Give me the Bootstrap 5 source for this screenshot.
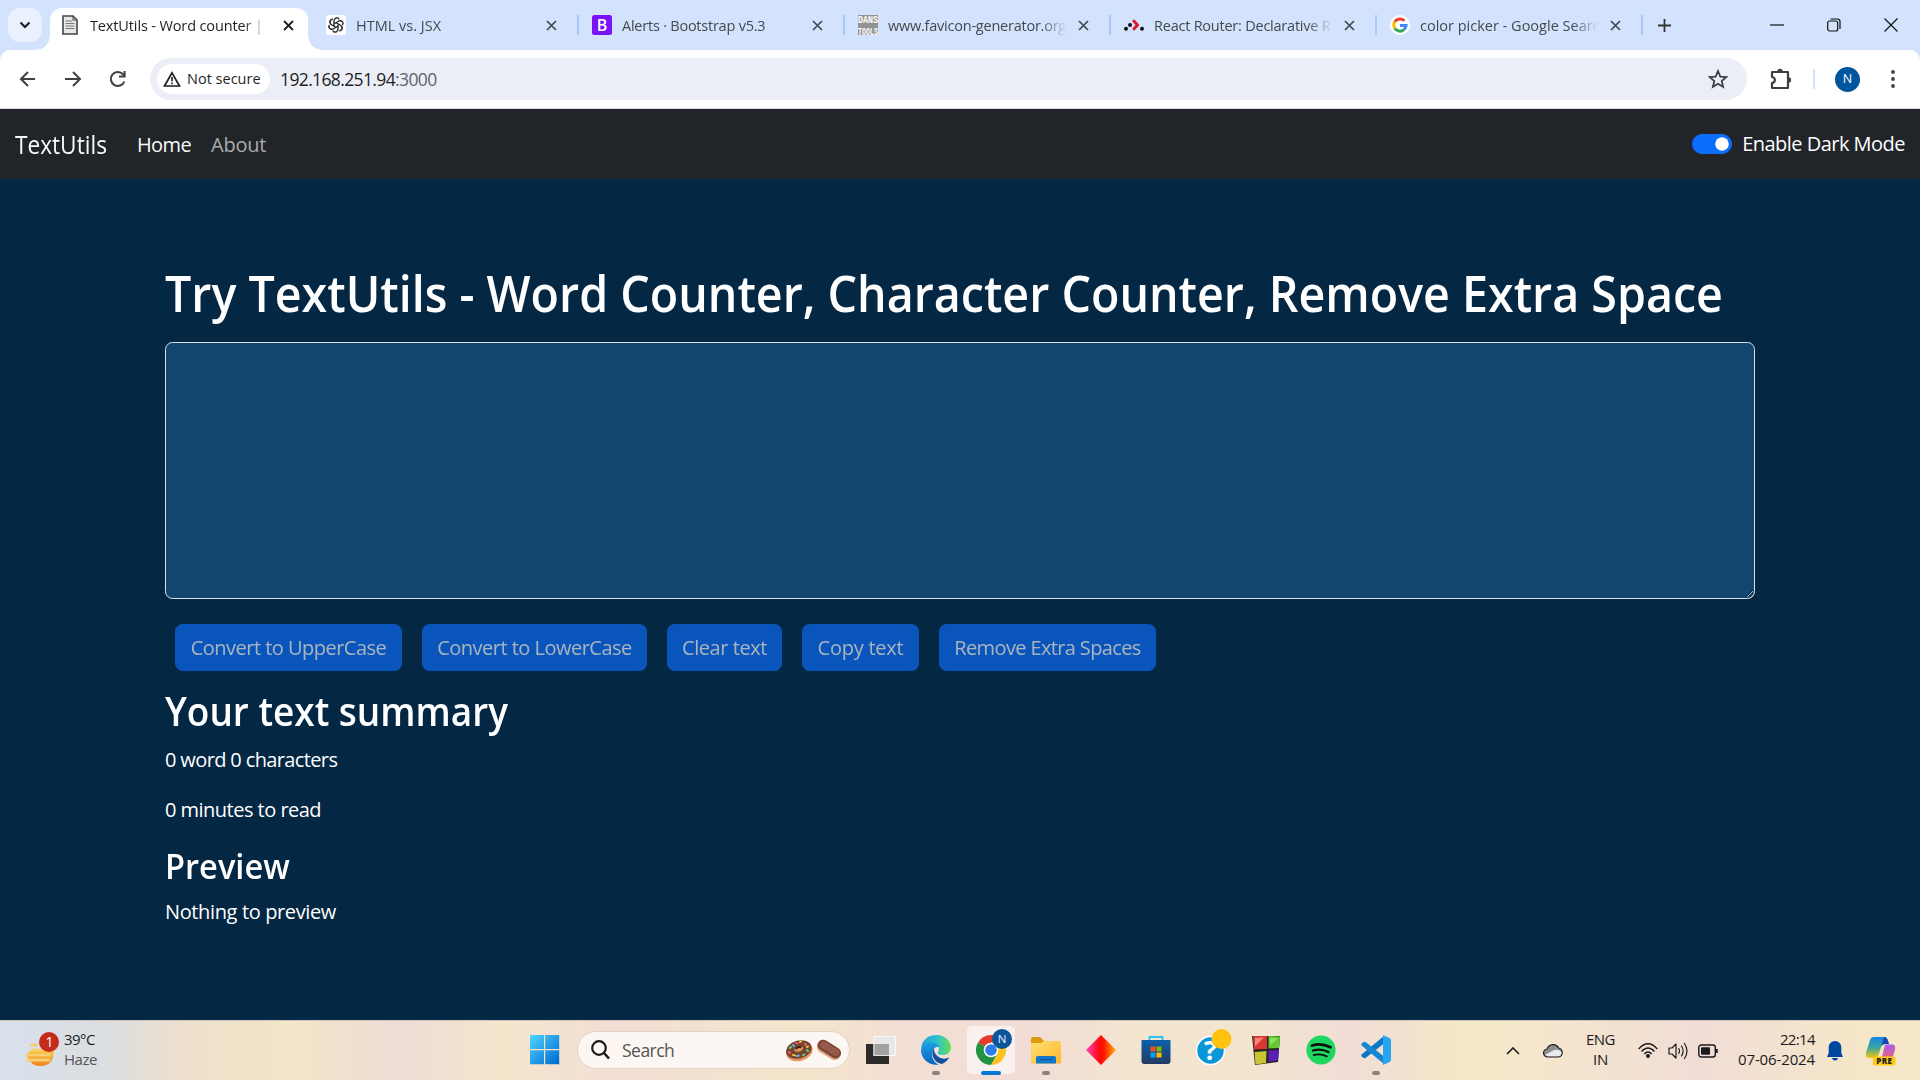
<!DOCTYPE html>
<html lang="en" data-bs-theme="light">
<head>
<meta charset="utf-8">
<title>TextUtils - Word counter</title>
<link href="https://cdn.jsdelivr.net/npm/bootstrap@5.3.0/dist/css/bootstrap.min.css" rel="stylesheet">
<style>
:root{font-size:20px}
body{width:1920px;height:1080px;overflow:hidden;background:#042743;font-family:"Open Sans","Noto Sans",sans-serif}
svg{display:block;flex:none}
/* text tightening */
.sq1,.sq2,.sq3,.sq4,.sq5,.sq6,.narrow{display:inline-block;white-space:nowrap}
.sq1{letter-spacing:-.13px}
.sq2{letter-spacing:-.23px}
.sq3{letter-spacing:-.37px}
.sq4{letter-spacing:-.45px}
.sq5{letter-spacing:-.52px}
.sq6{letter-spacing:-.63px}
.narrow{transform:scaleX(.9317);transform-origin:0 50%}
.narrow-more{transform:scaleX(.9235)}
.brandname{transform:scaleX(.906);width:92px}
/* browser tab strip */
.tabstrip{height:50px;background:#d3e3fd;padding-left:8px}
.tabsearch{width:34px;height:34px;border-radius:12px;background:#e9f1fe;margin-right:8px}
.tab{width:266px;height:34px;padding-left:13px;font-size:14.5px;color:#45494d;position:relative}
.tab::after{content:"";position:absolute;right:0;top:7px;width:2px;height:20px;background:#a8c7fa}
.tab-title{width:182px;margin:0 8px 0 10px;overflow:hidden;white-space:nowrap;flex:none;padding-top:1px;-webkit-mask-image:linear-gradient(90deg,#000 84%,transparent 98%)}
.tab-on{width:258px;height:42px;background:#fff;border-radius:12px 12px 0 0;padding-left:12px;padding-bottom:8px;margin-right:5px;align-self:flex-end;font-size:14.5px;color:#1f1f1f;position:relative}
.tab-on .tab-title{margin:0 11px 0 12px}
.tab-on::before,.tab-on::after{content:"";position:absolute;bottom:0;width:14px;height:14px}
.tab-on::before{left:-14px;background:radial-gradient(circle at 0 0,transparent 13.5px,#fff 14px)}
.tab-on::after{right:-14px;background:radial-gradient(circle at 100% 0,transparent 13.5px,#fff 14px)}
.plus{margin-left:15px}
.winbtns{padding-right:22px;gap:43px}
/* address bar */
.toolbar{height:59px;background:#fff;border-bottom:1px solid #dfe1e5;border-radius:10px 10px 0 0;padding-left:19px}
.strip-under{background:#d3e3fd}
.fwd{margin:0 27px}
.reload{margin-right:23px}
.omnibox{width:1597px;height:42px;border-radius:21px;background:#ebeef7;padding-left:7px;padding-right:19px}
.chip{width:113px;height:30px;border-radius:15px;background:#fff;padding-left:6px;gap:6px;font-size:14.5px;color:#1f1f1f}
.addr{margin-left:10px;font-size:17.5px;color:#1f1f1f}
.port{color:#5f6368}
.puzzle{margin:0 21px 0 23px}
.vsep{width:2px;height:20px;background:#d3e3fd}
.avatar{width:25px;height:25px;border-radius:50%;background:#00559f;color:#fff;font-size:12.5px;margin:0 30px 0 20px}
/* app */
.appnav{height:70px;padding:0 15px}
.appnav .navbar-brand{font-size:25px;margin-right:20px;padding:2px 0 0}
.appnav .nav-link{padding:2px 10px 0}
.appnav .form-check-input{width:40px;height:20px;margin:0}
.darkswitch{gap:10px}
.appmain{height:841px;padding-top:84px;width:1590px;margin:0 auto}
.appmain h1{font-size:50px;line-height:60px;font-weight:600;margin:0 0 19px}
.appmain h2{font-size:40px;line-height:48px;font-weight:600;margin:16px 0 10px}
.appmain h2.preview{font-size:35px;line-height:42px;margin-top:20px}
.appmain p{line-height:30px;margin:0 0 20px;padding-top:1px;margin-top:-1px}
.editor{height:257px;background:#13466e!important;border-radius:7.5px;border:1px solid #dee2e6;padding:8px 15px}
.actions{margin:25px 0 0 10px;gap:20px}
.abtn{height:47px;border-radius:7.5px;padding:1px 0 0;font-size:20px}
.w227{width:227px}.w225{width:225px}.w115{width:115px}.w117{width:117px}.w217{width:217px}
/* taskbar */
.taskbar{height:60px;border-top:1px solid #cfc8c2;color:#1b1b1b;font-size:15px;background:linear-gradient(90deg,#d8e0ec 0,#dcdedf 110px,#efe0cb 195px,#f3e5c8 290px,#efdcd5 400px,#f4e5cc 500px,#f3dfd4 620px,#f3e5ca 800px,#f4dfd5 900px,#f1ddd6 1030px,#f4e5d0 1140px,#f3e4d0 1250px,#f1ddd6 1350px,#f4e6c8 1450px,#f5e7ca 1510px,#f1ddd6 1700px,#f5e6c9 1850px,#f5e7c8 1920px)}
.weather{width:517px;padding-left:25px;gap:4px}
.tcell{width:55px;height:59px;position:relative}
.tcell.live::after{content:"";position:absolute;bottom:5px;left:23.5px;width:8px;height:4px;border-radius:2px;background:#8b817c}
.tcell.cur::before{content:"";position:absolute;left:3.5px;top:5px;width:48px;height:48px;border-radius:5px;background:#faf0ed}
.tcell.cur::after{left:17.5px;width:20px;background:#0078d4}
.tcell svg{position:relative;overflow:visible;margin-bottom:1px}
.pill{width:273px;height:38px;border-radius:19px;background:#fcf7f2;border:1px solid #e2d2c6;margin:0 3.5px 1px 5px;padding:0 7px 0 13px;font-size:17.5px;color:#555;gap:12px}
.two{line-height:20px;margin-top:-4px}
.haze{color:#555}
.tray{padding-right:24px}
.cloud{margin:0 23px}
.lang{width:29px}
.wifi{margin:0 10px 0 23px}
.clock{width:77px;margin:-4px 12px 0 20px}
.bell{margin-right:23px}
</style>
</head>
<body>
<div class="tabstrip d-flex align-items-center">
  <div class="tabsearch d-flex align-items-center justify-content-center flex-shrink-0"><svg width="12" height="8" viewBox="0 0 12 8"><path d="M1.500 1.500 6 6l4.500-4.500" fill="none" stroke="#1f1f1f" stroke-width="2.200"/></svg></div>
  <div class="tab-on d-flex align-items-center flex-shrink-0">
    <svg width="16" height="20" viewBox="0 0 16 20"><path d="M1 1h10l4 4v14H1z" fill="#e8e8e8" stroke="#444" stroke-width="1.600"/><path d="M11 1v4h4" fill="none" stroke="#444"/><path d="M3.500 6h7M3.500 8.500h9M3.500 11h9M3.500 13.500h9" stroke="#777" stroke-width="1.200"/></svg>
    <div class="tab-title"><span class="sq1">TextUtils - Word counter</span> | c</div>
    <svg width="11" height="11" viewBox="0 0 11 11"><path d="m1 1 9 9m0-9-9 9" stroke="#1f1f1f" stroke-width="1.800"/></svg>
  </div>
  <div class="tab d-flex align-items-center flex-shrink-0">
    <svg width="20" height="20" viewBox="0 0 20 20"><rect width="20" height="20" rx="3" fill="#fff"/><g fill="none" stroke="#222" stroke-width=".9"><path id="k" d="M8 11.200V5.700c0-3.600 4.500-4.200 5.600-1.400M8 8.800l4.300-2.500c2.600-1.500 5.400 1.200 4 3.600"/><use href="#k" transform="rotate(60 10 10)"/><use href="#k" transform="rotate(120 10 10)"/><use href="#k" transform="rotate(180 10 10)"/><use href="#k" transform="rotate(240 10 10)"/><use href="#k" transform="rotate(300 10 10)"/></g></svg>
    <div class="tab-title">HTML vs. JSX</div>
    <svg width="11" height="11" viewBox="0 0 11 11"><path d="m1 1 9 9m0-9-9 9" stroke="#45494d" stroke-width="1.700"/></svg>
  </div>
  <div class="tab d-flex align-items-center flex-shrink-0">
    <svg width="20" height="20" viewBox="0 0 20 20"><rect width="20" height="20" rx="2.500" fill="#7a12f8"/><text x="10" y="15.800" text-anchor="middle" font-size="16" font-weight="600" fill="#fff" font-family="Open Sans,sans-serif">B</text></svg>
    <div class="tab-title"><span class="sq2">Alerts · Bootstrap v5.3</span></div>
    <svg width="11" height="11" viewBox="0 0 11 11"><path d="m1 1 9 9m0-9-9 9" stroke="#45494d" stroke-width="1.700"/></svg>
  </div>
  <div class="tab d-flex align-items-center flex-shrink-0">
    <svg width="20" height="20" viewBox="0 0 20 20"><rect width="20" height="20" fill="#929292"/><g fill="#fff" font-size="10" font-weight="700" font-family="Liberation Mono,monospace"><text x="0" y="7.500" textLength="20" lengthAdjust="spacingAndGlyphs">DANS</text><text x="0" y="19.500" textLength="20" lengthAdjust="spacingAndGlyphs">TOOLS</text></g></svg>
    <div class="tab-title"><span class="sq2">www.favicon-generator.org</span></div>
    <svg width="11" height="11" viewBox="0 0 11 11"><path d="m1 1 9 9m0-9-9 9" stroke="#45494d" stroke-width="1.700"/></svg>
  </div>
  <div class="tab d-flex align-items-center flex-shrink-0">
    <svg width="20" height="20" viewBox="0 0 20 20"><path d="m10 6.200 3.600 3.800L10 13.800" fill="none" stroke="#e0162b" stroke-width="3" stroke-linecap="round" stroke-linejoin="round"/><circle cx="2" cy="13.700" r="2" fill="#111"/><circle cx="6" cy="10" r="2" fill="#111"/><circle cx="18" cy="13.700" r="2" fill="#111"/></svg>
    <div class="tab-title"><span class="sq2">React Router: Declarative R</span></div>
    <svg width="11" height="11" viewBox="0 0 11 11"><path d="m1 1 9 9m0-9-9 9" stroke="#45494d" stroke-width="1.700"/></svg>
  </div>
  <div class="tab d-flex align-items-center flex-shrink-0">
    <svg width="20" height="20" viewBox="0 0 20 20"><circle cx="10" cy="10" r="10" fill="#fff"/><g fill="none" stroke-width="3"><path d="M14.400 5.800A6.200 6.200 0 0 0 4.700 6.800" stroke="#ea4335"/><path d="M4.700 6.800a6.200 6.200 0 0 0 0 6.400" stroke="#fbbc05"/><path d="M4.700 13.200a6.200 6.200 0 0 0 9.300 1.500" stroke="#34a853"/><path d="M14 14.700a6 6 0 0 0 2.100-4.200H10" stroke="#4285f4"/></g></svg>
    <div class="tab-title">color picker - Google Searc</div>
    <svg width="11" height="11" viewBox="0 0 11 11"><path d="m1 1 9 9m0-9-9 9" stroke="#45494d" stroke-width="1.700"/></svg>
  </div>
  <svg class="plus" width="13" height="13" viewBox="0 0 13 13"><path d="M6.500 0v13M0 6.500h13" stroke="#333" stroke-width="1.800"/></svg>
  <div class="winbtns d-flex align-items-center ms-auto">
    <svg width="14" height="14" viewBox="0 0 14 14"><path d="M0 7h14" stroke="#111" stroke-width="1.200"/></svg>
    <svg width="14" height="14" viewBox="0 0 14 14"><g fill="none" stroke="#111" stroke-width="1.200"><rect x=".7" y="3" width="10" height="10" rx="2"/><path d="M3.500 1h7a2.500 2.500 0 0 1 2.500 2.500V11"/></g></svg>
    <svg width="14" height="14" viewBox="0 0 14 14"><path d="m.5.5 13 13m0-13-13 13" stroke="#111" stroke-width="1.200"/></svg>
  </div>
</div>
<div class="strip-under"><div class="toolbar d-flex align-items-center">
  <svg width="18" height="18" viewBox="0 0 18 18"><path d="M16 9H2.500M9 2 2 9l7 7" fill="none" stroke="#3c4043" stroke-width="2"/></svg>
  <svg class="fwd" width="18" height="18" viewBox="0 0 18 18"><path d="M1 9h14.500M9 2l7 7-7 7" fill="none" stroke="#3c4043" stroke-width="2"/></svg>
  <svg class="reload" width="18" height="18" viewBox="0 0 18 18"><path d="M15.400 11.500A7 7 0 1 1 14 4.200l1.800 1.900" fill="none" stroke="#3c4043" stroke-width="2"/><path d="M16.600 1v6.600H10V5.600h4.600V1z" fill="#3c4043"/></svg>
  <div class="omnibox d-flex align-items-center flex-shrink-0">
    <div class="chip d-flex align-items-center"><svg width="18" height="16" viewBox="0 0 18 16"><path d="M9 1.800 16.500 15h-15z" fill="none" stroke="#1f1f1f" stroke-width="1.700"/><path d="M9 6v4.200M9 11.500v1.700" stroke="#1f1f1f" stroke-width="1.600"/></svg><span>Not secure</span></div>
    <div class="addr"><span class="sq6">192.168.251.94<span class="port">:3000</span></span></div>
    <svg class="ms-auto" width="20" height="20" viewBox="0 0 20 20"><path d="m10 2 2.300 5.600 6 .5-4.600 3.900 1.400 5.900L10 14.800 4.900 17.900 6.300 12 1.700 8.100l6-.5z" fill="none" stroke="#3c4043" stroke-width="1.800"/></svg>
  </div>
  <svg class="puzzle" width="22" height="22" viewBox="0 0 22 22"><path d="M2 4h16v16H2v-5c3.800-.5 3.800-5.500 0-6z" fill="none" stroke="#3c4043" stroke-width="2.200" stroke-linejoin="round"/><path d="M7.300 3.500a2.700 2.700 0 0 1 5.400 0zM18.500 9.300a2.700 2.700 0 0 1 0 5.400z" fill="#3c4043"/></svg>
  <div class="vsep"></div>
  <div class="avatar d-flex align-items-center justify-content-center">N</div>
  <svg width="6" height="18" viewBox="0 0 6 18"><g fill="#3c4043"><circle cx="3" cy="2" r="1.900"/><circle cx="3" cy="9" r="1.900"/><circle cx="3" cy="16" r="1.900"/></g></svg>
</div></div>

<nav class="navbar navbar-expand bg-dark appnav" data-bs-theme="dark">
  <a class="navbar-brand"><span class="narrow brandname">TextUtils</span></a>
  <div class="navbar-nav me-auto"><a class="nav-link active"><span class="sq6">Home</span></a><a class="nav-link"><span class="sq2">About</span></a></div>
  <div class="darkswitch d-flex align-items-center"><div class="form-check form-switch p-0 m-0 d-flex align-items-center"><input class="form-check-input" id="darkMode" type="checkbox" checked></div><label class="text-white" for="darkMode"><span class="sq5">Enable Dark Mode</span></label></div>
</nav>

<main class="appmain text-white">
  <h1><span class="narrow">Try TextUtils - Word Counter, Character Counter, Remove Extra Space</span></h1>
  <textarea class="form-control editor"></textarea>
  <div class="actions d-flex">
    <button class="btn btn-primary abtn w227" disabled><span class="sq5">Convert to UpperCase</span></button>
    <button class="btn btn-primary abtn w225" disabled><span class="sq5">Convert to LowerCase</span></button>
    <button class="btn btn-primary abtn w115" disabled><span class="sq4">Clear text</span></button>
    <button class="btn btn-primary abtn w117" disabled><span class="sq2">Copy text</span></button>
    <button class="btn btn-primary abtn w217" disabled><span class="sq6">Remove Extra Spaces</span></button>
  </div>
  <h2><span class="narrow narrow-more">Your text summary</span></h2>
  <p><span class="sq6">0 word 0 characters</span></p>
  <p><span class="sq5">0 minutes to read</span></p>
  <h2 class="preview"><span class="narrow">Preview</span></h2>
  <p><span class="sq3">Nothing to preview</span></p>
</main>

<footer class="taskbar d-flex align-items-center">
  <div class="weather d-flex align-items-center flex-shrink-0">
    <svg width="35" height="38" viewBox="0 0 35 38"><defs><linearGradient id="sun" x1="0" y1="0" x2="0" y2="1"><stop offset="0" stop-color="#ffc83a"/><stop offset="1" stop-color="#f08022"/></linearGradient></defs><path d="M2 24q-.5-7 14-6t12.500 1q.5 15-13.500 15Q6 34 2 24z" fill="url(#sun)"/><path d="M6.500 13h5M7 18h13M2 23h13M2 28h22M17 23h8" stroke="#f2cf72" stroke-width="3" stroke-linecap="round"/><circle cx="24" cy="10" r="10" fill="#c42b1c"/><text x="24.500" y="15" text-anchor="middle" font-size="14" fill="#fff" font-family="Open Sans,sans-serif">1</text></svg>
    <div class="two"><div><span class="sq5">39°C</span></div><div class="haze"><span class="sq4">Haze</span></div></div>
  </div>
  <div class="tcell d-flex align-items-center justify-content-center"><svg width="30" height="30" viewBox="0 0 30 30"><defs><linearGradient id="win" x1="0" y1="0" x2="1" y2="1"><stop offset="0" stop-color="#50d5ff"/><stop offset="1" stop-color="#0067cf"/></linearGradient></defs><path d="M0 0h14v14H0zM15.200 0h14v14h-14zM0 15.200h14v14H0zM15.200 15.200h14v14h-14z" fill="url(#win)"/></svg></div>
  <div class="pill d-flex align-items-center flex-shrink-0">
    <svg width="19" height="20" viewBox="0 0 19 20"><circle cx="8" cy="8" r="6.800" fill="none" stroke="#1b1b1b" stroke-width="2.200"/><path d="m13 13 5 5.500" stroke="#1b1b1b" stroke-width="2.600"/></svg>
    <span class="sq5">Search</span>
    <svg class="ms-auto" width="57" height="24" viewBox="0 0 57 24"><g transform="rotate(-15 14 12)"><ellipse cx="14" cy="13.500" rx="13.500" ry="9.500" fill="#e8956a"/><ellipse cx="14" cy="11.500" rx="13" ry="9" fill="#76452a"/><ellipse cx="14" cy="11" rx="4.500" ry="2.500" fill="#d99562"/><path d="M11 10q3-2 6 0" stroke="#3b1e10" stroke-width="2" fill="none"/></g><g stroke-width="1.800" stroke-linecap="round"><path d="m5 10 1-1M18 17l1.500-.5M22 12l1 1" stroke="#4de0a0"/><path d="m11 5 1.500.5M4 14l1 1M20 6l1 1" stroke="#ff5c8d"/><path d="m8 17 2 .5M15 4l1-.5M22 9l1-.5" stroke="#ffd54a"/><path d="m12 18 2-.3M8 7l1 1" stroke="#5bb6ff"/></g><g transform="rotate(32 44 12)"><rect x="31" y="6" width="26" height="12.500" rx="6.200" fill="#dfa27f"/><rect x="31" y="5.500" width="25.500" height="11" rx="5.500" fill="#7c4337"/><rect x="33" y="7" width="21.500" height="7" rx="3.500" fill="#955a4c"/></g></svg>
  </div>
  <div class="tcell d-flex align-items-center justify-content-center"><svg width="30" height="29" viewBox="0 0 30 29"><path d="M0 8h23v20H0z" fill="#2d2c2a"/><path d="M7.500 0H30v20H7.500z" fill="#e8e8e8"/><path d="M7.500 8H23v12H7.500z" fill="#a3a29f"/><path d="M8 .5h21.500v19H8z" fill="none" stroke="#fff" stroke-opacity=".7"/></svg></div>
  <div class="tcell live d-flex align-items-center justify-content-center"><svg width="30" height="30" viewBox="0 0 30 30"><defs><linearGradient id="e1"><stop offset="0" stop-color="#1f9ee0"/><stop offset=".55" stop-color="#2bc3c9"/><stop offset="1" stop-color="#6ae04e"/></linearGradient><linearGradient id="e2" x1="0" y1="0" x2="0" y2="1"><stop offset="0" stop-color="#1ba1e6"/><stop offset="1" stop-color="#0a62c0"/></linearGradient></defs><path d="M0 14C1 5 7 0 15 0c9 0 15 6 15 12.500 0 5-4 7.500-8 7.500-3.500 0-5.500-1-5.500-2 0-.8 1.500-1.500 1.500-4 0-3-3-5.500-7.500-5.500C5 8.500 1 12 0 14z" fill="url(#e1)"/><path d="M0 15C1 10 5.500 7.500 10.500 7.500c4 0 7.500 2 7.500 4.500-3-1-7 2-7 7.500 0 6 5 10 7 10.200C8 31 0 24 0 15z" fill="url(#e2)"/><path d="M12.500 13.500c-3 5 0 14 8 15.500 3.500-1 6.500-4 7.500-6.500-6 3-14 0-15.500-9z" fill="#134fa0"/></svg></div>
  <div class="tcell live cur d-flex align-items-center justify-content-center"><svg width="30" height="30" viewBox="0 0 30 30"><path d="M15 15 2 7.500A15 15 0 0 1 28 7.500H15z" fill="#e33b2e"/><path d="M2 7.500A15 15 0 0 0 15 30l6.500-11.300L15 15z" fill="#229342"/><path d="M28 7.500A15 15 0 0 1 15 30l6.500-11.200L15 7.500z" fill="#fcc31e"/><circle cx="15" cy="15" r="7.300" fill="#fff"/><circle cx="15" cy="15" r="5.800" fill="#2b7de9"/><circle cx="26" cy="4" r="10" fill="#0b559c"/><text x="26" y="8.300" text-anchor="middle" font-size="11.500" fill="#e4f0ff" font-family="Open Sans,sans-serif">N</text></svg></div>
  <div class="tcell live d-flex align-items-center justify-content-center"><svg width="30" height="27" viewBox="0 0 30 27"><defs><linearGradient id="fo" x1="0" y1="0" x2="1" y2="1"><stop offset="0" stop-color="#ffdf72"/><stop offset="1" stop-color="#fdb92a"/></linearGradient></defs><path d="M0 2q0-2 2-2h7l4 4v6H0z" fill="#dd9a09"/><path d="M0 6h10l3-2h15q2 0 2 2v20.500H0z" fill="url(#fo)"/><path d="M5 26.500V21q0-2 2-2h16q2 0 2 2v5.500z" fill="#1279c9"/><path d="M8.500 22.500h13" stroke="#0b559c"/></svg></div>
  <div class="tcell d-flex align-items-center justify-content-center"><svg width="30" height="30" viewBox="0 0 30 30"><defs><linearGradient id="di"><stop offset="0" stop-color="#ff3fc0"/><stop offset=".45" stop-color="#ff0a0a"/><stop offset=".6" stop-color="#ff1a00"/><stop offset="1" stop-color="#ffb400"/></linearGradient></defs><path d="m15 0 15 15-15 15L0 15z" fill="url(#di)"/></svg></div>
  <div class="tcell d-flex align-items-center justify-content-center"><svg width="30" height="30" viewBox="0 0 30 30"><defs><linearGradient id="st" x1="0" y1="0" x2="0" y2="1"><stop offset="0" stop-color="#0c61ad"/><stop offset="1" stop-color="#243860"/></linearGradient></defs><path d="M8.500 6V2h13v4" fill="none" stroke="#2cc0f3" stroke-width="1.800"/><path d="M.5 5h29v21q0 3-3 3h-23q-3 0-3-3z" fill="url(#st)"/><path d="M9.500 11.500h5v5h-5z" fill="#f25022"/><path d="M15.500 11.500h5v5h-5z" fill="#7fba00"/><path d="M9.500 17.500h5v5h-5z" fill="#00a4ef"/><path d="M15.500 17.500h5v5h-5z" fill="#ffb900"/></svg></div>
  <div class="tcell d-flex align-items-center justify-content-center"><svg width="30" height="30" viewBox="0 0 30 30"><circle cx="14.500" cy="15.500" r="14" fill="#0a96d8" stroke="#fff" stroke-width="1.500"/><text x="14.500" y="25" text-anchor="middle" font-size="27" font-weight="700" fill="#fff" font-family="Open Sans,sans-serif">?</text><circle cx="25.500" cy="4" r="10" fill="#ffc20e"/></svg></div>
  <div class="tcell d-flex align-items-center justify-content-center"><svg width="30" height="30" viewBox="0 0 30 30"><path d="m1 1 28 0-2 26-23 3z" fill="#222"/><path d="m2 1 14 0v13l-13 .5z" fill="#d9362f"/><path d="M17.500 1 29 1.500 28 13l-10.500.5z" fill="#63c92e"/><path d="m3.500 17 12-1-.5 12-10.500 1.500z" fill="#c9c431"/><path d="m17.500 15.500 10.500-.5-1 10-9.500 2z" fill="#5c1eb5"/><path d="m4 3 9-.5-9 9z" fill="#f0837a"/><path d="m19 3 8 .5-8 7z" fill="#8be05c"/></svg></div>
  <div class="tcell d-flex align-items-center justify-content-center"><svg width="30" height="30" viewBox="0 0 30 30"><circle cx="15" cy="15" r="14.600" fill="#1ed760"/><g fill="none" stroke="#101010" stroke-linecap="round"><path d="M6 10.500q9.500-2.800 18.500 1.800" stroke-width="2.800"/><path d="M7 15.500q8.500-2.300 15.500 1.600" stroke-width="2.300"/><path d="M7.800 20q7-1.800 13 1.400" stroke-width="1.900"/></g></svg></div>
  <div class="tcell live d-flex align-items-center justify-content-center"><svg width="30" height="30" viewBox="0 0 30 30"><path d="M.6 19.500q-.8.9 0 1.700l2 1.800q.9.700 1.900 0L23 8.500V1z" fill="#0a79c4"/><path d="M.6 10.500q-.8-.9 0-1.700l2-1.800q.9-.7 1.900 0L23 21.500V29z" fill="#1587d0"/><path d="m22 0 6.500 3q1.500.8 1.500 2v20q0 1.200-1.500 2L22 30z" fill="#27a5f0"/></svg></div>
  <div class="tray d-flex align-items-center ms-auto flex-shrink-0">
    <svg width="14" height="8" viewBox="0 0 14 8"><path d="m1 7 6-6 6 6" fill="none" stroke="#1b1b1b" stroke-width="1.600"/></svg>
    <svg class="cloud" width="20" height="15" viewBox="0 0 20 15"><path d="M5 14a4 4 0 0 1-.8-8A6.200 6.200 0 0 1 15.600 5 4.600 4.600 0 0 1 15.500 14z" fill="#8e8e8e" stroke="#1b1b1b" stroke-width="1.200"/><path d="M2 12 11 7q6-1 7.500 2.500 0 3.500-3 3.800H5z" fill="#e8ecf2"/></svg>
    <div class="two lang text-center"><div><span class="sq5">ENG</span></div><div><span class="sq2">IN</span></div></div>
    <svg class="wifi" width="20" height="16" viewBox="0 0 20 16"><g fill="none" stroke="#1b1b1b" stroke-width="1.300"><path d="M.7 6Q10-4.500 19.300 6M3.500 8.500Q10 1.500 16.500 8.500M6.300 11Q10 7 13.700 11"/></g><circle cx="10" cy="13" r="2" fill="#1b1b1b"/></svg>
    <svg width="20" height="18" viewBox="0 0 20 18"><g fill="none" stroke="#1b1b1b" stroke-width="1.200" stroke-linecap="round"><path d="M1 6v6h3l4 4V2L4 6z" stroke-linejoin="round"/><path d="M10.700 6.500q1.600 2.500 0 5M13.500 4q3.300 5 0 10M16.500 1.500q5 7.500 0 15"/></g></svg>
    <svg class="ms-2" width="20" height="14" viewBox="0 0 20 14"><rect x=".8" y="1" width="16.500" height="12" rx="2.500" fill="none" stroke="#1b1b1b" stroke-width="1.400"/><rect x="3" y="3.200" width="9" height="7.600" rx="1" fill="#1b1b1b"/><path d="M18.500 5v4" stroke="#1b1b1b" stroke-width="2.400"/></svg>
    <div class="two clock text-end"><div><span class="sq6">22:14</span></div><div><span class="sq1">07-06-2024</span></div></div>
    <svg class="bell" width="16" height="20" viewBox="0 0 16 20"><path d="M8 0a6.300 6.300 0 0 1 6.300 6.300V12l1.700 4H0l1.700-4V6.300A6.300 6.300 0 0 1 8 0zM5 17h6q-.5 2.500-3 2.500T5 17z" fill="#0046a0"/></svg>
    <svg width="30" height="30" viewBox="0 0 30 30"><defs><linearGradient id="c1" x1="0" y1="0" x2="0" y2="1"><stop offset="0" stop-color="#1487e8"/><stop offset=".5" stop-color="#3aa59a"/><stop offset="1" stop-color="#f2c811"/></linearGradient><linearGradient id="c2" x1="0" y1="0" x2="0" y2="1"><stop offset="0" stop-color="#a75cf0"/><stop offset="1" stop-color="#f3676b"/></linearGradient></defs><path d="M8 1h10q3 0 4 4l1 3h-4q-3 0-4 3l-2.500 8q-1 3-3.500 3H3q-4 0-3-5L4 4q1-3 4-3z" fill="url(#c1)"/><path d="M18 1q3 0 4 4l1 3h-4q-2 0-3.500 2z" fill="#1546b8"/><path d="M20 8.500h6q4 0 3 5l-2 7q-1 4-5 4h-9q2-1 3-4l2-8q.7-4 2-4z" fill="url(#c2)"/><rect x="7" y="20.500" width="22.500" height="9" rx="2" fill="#ffc917"/><text x="18.300" y="28" text-anchor="middle" font-size="8" font-weight="800" fill="#222" font-family="Open Sans,sans-serif" letter-spacing=".4">PRE</text></svg>
  </div>
</footer>
<script src="https://cdn.jsdelivr.net/npm/bootstrap@5.3.0/dist/js/bootstrap.bundle.min.js"></script>
</body>
</html>
